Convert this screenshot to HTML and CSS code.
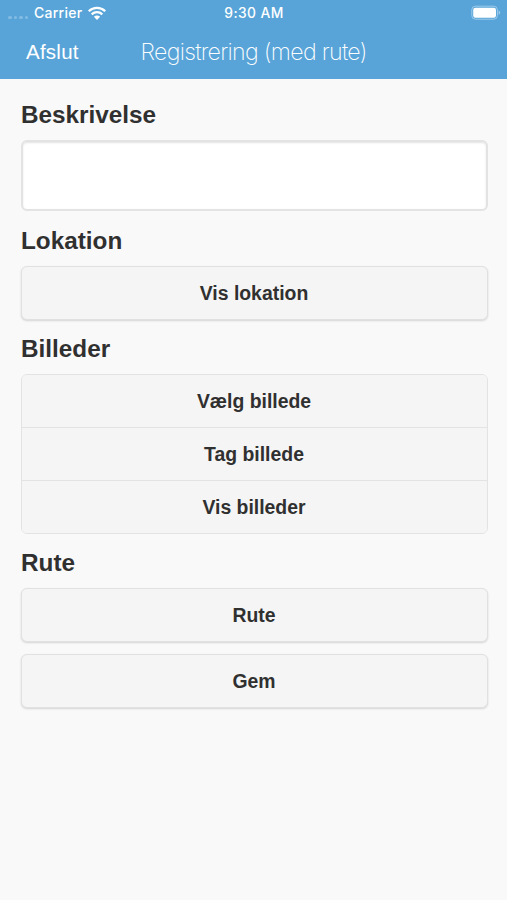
FILE: index.html
```html
<!DOCTYPE html>
<html lang="da">
<head>
<meta charset="utf-8">
<title>Registrering (med rute)</title>
<link rel="stylesheet" href="styles.css">
</head>
<body>
<header class="header">
  <div class="status">
    <div class="status-left">
      <span class="signal"><i></i><i></i><i></i><i></i></span>
      <span class="carrier">Carrier</span>
      <svg class="wifi" width="20" height="15" viewBox="0 0 20 15">
        <path d="M1.8 5.2C6.4.7 13.6.7 18.2 5.2" />
        <path d="M4.7 8.3C7.7 5.5 12.3 5.5 15.3 8.3" />
        <path class="wifi-dot" d="M6.9 10.8C8.7 9.2 11.3 9.2 13.1 10.8L10 14Z" />
      </svg>
    </div>
    <span class="time">9:30 AM</span>
    <svg class="battery" width="30" height="16" viewBox="0 0 30 16">
      <rect class="battery-case" x=".8" y="1.2" width="25.6" height="13" rx="3.6" />
      <rect class="battery-fill" x="2.2" y="2.7" width="22.8" height="10" rx="2.2" />
      <path class="battery-tip" d="M27.6 5.6Q29.2 6.2 29.2 7.7T27.6 9.8Z" />
    </svg>
  </div>
  <nav class="nav">
    <a class="back">Afslut</a>
    <h1 class="title">Registrering (med rute)</h1>
  </nav>
</header>
<main class="content">
  <h2 class="heading">Beskrivelse</h2>
  <textarea class="field"></textarea>
  <h2 class="heading">Lokation</h2>
  <button class="button">Vis lokation</button>
  <h2 class="heading">Billeder</h2>
  <div class="group">
    <button class="item">Vælg billede</button>
    <button class="item">Tag billede</button>
    <button class="item">Vis billeder</button>
  </div>
  <h2 class="heading">Rute</h2>
  <button class="button">Rute</button>
  <button class="button">Gem</button>
</main>
</body>
</html>
```
FILE: styles.css
```css
* { box-sizing: border-box; }
body {
  margin: 0;
  min-height: 900px;
  background: #f9f9f9;
  color: #303030;
  font-family: "Liberation Sans", Arial, sans-serif;
}
.header {
  height: 79px;
  background: #58a4d8;
  color: #fff;
}
.status {
  display: grid;
  grid-template-columns: 1fr auto 1fr;
  align-items: center;
  height: 26px;
  padding: 0 6px 0 7px;
  font: 500 14px/26px Inter, sans-serif;
}
.status-left { display: flex; align-items: center; }
.signal { display: flex; gap: 2px; width: 27px; padding: 9px 0 0 1px; }
.signal i { width: 3.5px; height: 3.5px; border-radius: 50%; background: #83bce3; }
.carrier { width: 53px; letter-spacing: .25px; }
.wifi { fill: none; stroke: #fff; stroke-width: 2.3; }
.wifi .wifi-dot { fill: #fff; stroke: none; }
.time { font-size: 13.8px; letter-spacing: .4px; }
.battery { justify-self: end; }
.battery-case { fill: none; stroke: #9dcbeb; stroke-width: 1; }
.battery-fill { fill: #fff; }
.battery-tip { fill: #9dcbeb; }
.nav {
  display: flex;
  height: 53px;
  padding-left: 26px;
  line-height: 52px;
}
.back { width: 114.5px; font-size: 20.5px; letter-spacing: .25px; }
.title {
  margin: 0;
  font: 250 23.2px/52px Inter, sans-serif;
  letter-spacing: -.7px;
  white-space: nowrap;
}
.content {
  display: flex;
  flex-direction: column;
  padding: 22px 19.5px 0 20.5px;
}
.heading {
  margin: 0 0 11px;
  padding-left: .5px;
  font-size: 24.3px;
  line-height: 28px;
}
.field {
  height: 71px;
  margin: 0 0 16px;
  border: 2px solid #e3e3e3;
  border-radius: 6px;
  background: #fff;
  box-shadow: inset 0 1px 2px #e3e3e3;
  resize: none;
}
.button, .item {
  color: inherit;
  background: #f5f5f5;
  font: bold 19.4px/24px "Liberation Sans", Arial, sans-serif;
}
.button {
  height: 54px;
  margin: 0 0 15px;
  padding: 0;
  border: 1.5px solid #e1e1e1;
  border-radius: 6px;
  box-shadow: 0 1px 2px #d4d4d4;
}
.button + .button { margin-top: -3px; }
.group {
  display: flex;
  flex-direction: column;
  height: 160px;
  margin-bottom: 15px;
  border: 1.5px solid #e3e3e3;
  border-radius: 6px;
  overflow: hidden;
}
.item {
  flex: 1;
  padding: 0;
  border: 0;
}
.item + .item { border-top: 1.5px solid #e3e3e3; }
```
